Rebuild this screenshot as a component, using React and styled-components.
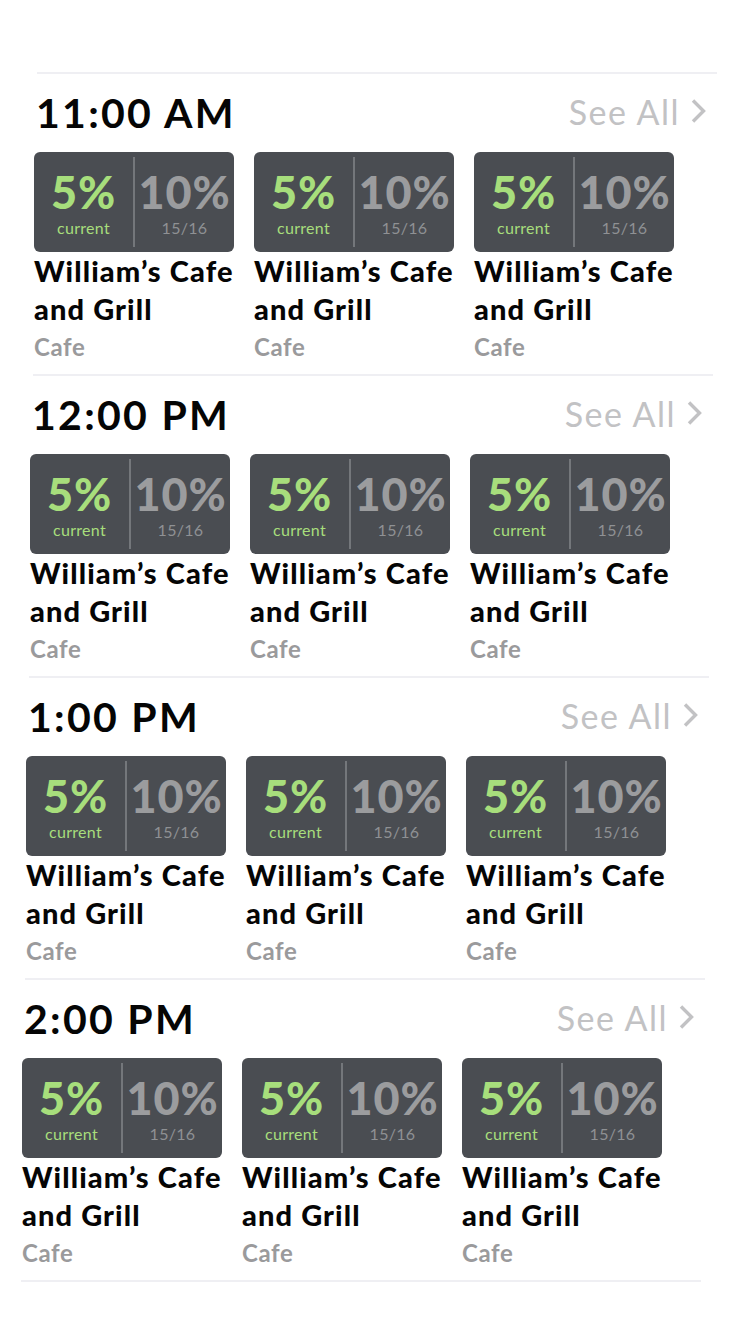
import React from "react";
import styled, { createGlobalStyle } from "styled-components";

const Global = createGlobalStyle`
  html, body { margin: 0; padding: 0; background: #ffffff; }
  body { font-family: Lato, "Noto Sans", sans-serif; -webkit-font-smoothing: antialiased; }
`;

const Page = styled.div`
  width: 750px;
  min-height: 1334px;
  padding-top: 72px;
  box-sizing: border-box;
  background: #fff;
`;

const Rule = styled.div`
  width: 680px;
  height: 2px;
  background: #efeff3;
  margin-left: ${(p) => p.$left}px;
  margin-top: ${(p) => p.$top || 0}px;
`;

const Section = styled.section`
  width: 680px;
  margin-left: ${(p) => p.$left}px;
  display: flex;
  flex-direction: column;
`;

const Header = styled.div`
  height: 78px;
  display: flex;
  align-items: center;
  justify-content: space-between;
  padding: 0 6px 0 3px;
  box-sizing: border-box;
`;

const Title = styled.h2`
  margin: 0;
  font-size: 41px;
  line-height: 48px;
  font-weight: 700;
  color: #050505;
  letter-spacing: 2.3px;
`;

const SeeAll = styled.a`
  display: flex;
  align-items: center;
  gap: 10px;
  font-size: 34px;
  font-weight: 400;
  color: #c2c2c4;
  letter-spacing: 1.5px;
  text-decoration: none;
  margin-top: -4px;
`;

const Row = styled.div`
  display: flex;
  gap: 20px;
  padding-left: 1px;
`;

const Item = styled.div`
  width: 200px;
  display: flex;
  flex-direction: column;
`;

const Card = styled.div`
  width: 200px;
  height: 100px;
  border-radius: 6px;
  background: #4a4d52;
  display: flex;
`;

const Half = styled.div`
  flex: 1;
  display: flex;
  flex-direction: column;
  align-items: center;
  padding-top: 17px;
`;

const Split = styled.div`
  width: 2px;
  margin: 5px 0;
  background: #74777b;
`;

const Big = styled.div`
  font-size: 45px;
  line-height: 46px;
  font-weight: 900;
  letter-spacing: 0.8px;
  color: ${(p) => (p.$active ? "#a7de7c" : "#9b9c9e")};
`;

const Small = styled.div`
  margin-top: 3px;
  font-size: 16px;
  line-height: 20px;
  font-weight: 400;
  color: ${(p) => (p.$active ? "#a7de7c" : "#8f9194")};
  letter-spacing: 0.3px;
`;

const Name = styled.div`
  font-size: 29px;
  line-height: 38px;
  font-weight: 900;
  letter-spacing: 1.1px;
  color: #050505;
  white-space: nowrap;
`;

const Kind = styled.div`
  font-size: 24px;
  line-height: 38px;
  font-weight: 700;
  letter-spacing: 0.6px;
  color: #9a9a9c;
`;

const Chevron = () => (
  <svg width="17" height="26" viewBox="0 0 17 26">
    <polyline points="3,2.5 13.5,13 3,23.5" fill="none" stroke="#c2c2c4" strokeWidth="3.4" />
  </svg>
);

const Deal = () => (
  <Item>
    <Card>
      <Half>
        <Big $active>5%</Big>
        <Small $active>current</Small>
      </Half>
      <Split />
      <Half>
        <Big>10%</Big>
        <Small>15/16</Small>
      </Half>
    </Card>
    <Name>
      William’s Cafe
      <br />
      and Grill
    </Name>
    <Kind>Cafe</Kind>
  </Item>
);

const times = ["11:00 AM", "12:00 PM", "1:00 PM", "2:00 PM"];

export default function App() {
  return (
    <Page>
      <Global />
      <Rule $left={37} />
      {times.map((t, i) => (
        <Section key={t} $left={33 - 4 * i}>
          <Header>
            <Title>{t}</Title>
            <SeeAll href="#">
              See All
              <Chevron />
            </SeeAll>
          </Header>
          <Row>
            <Deal />
            <Deal />
            <Deal />
          </Row>
          <Rule $left={0} $top={8} />
        </Section>
      ))}
    </Page>
  );
}
